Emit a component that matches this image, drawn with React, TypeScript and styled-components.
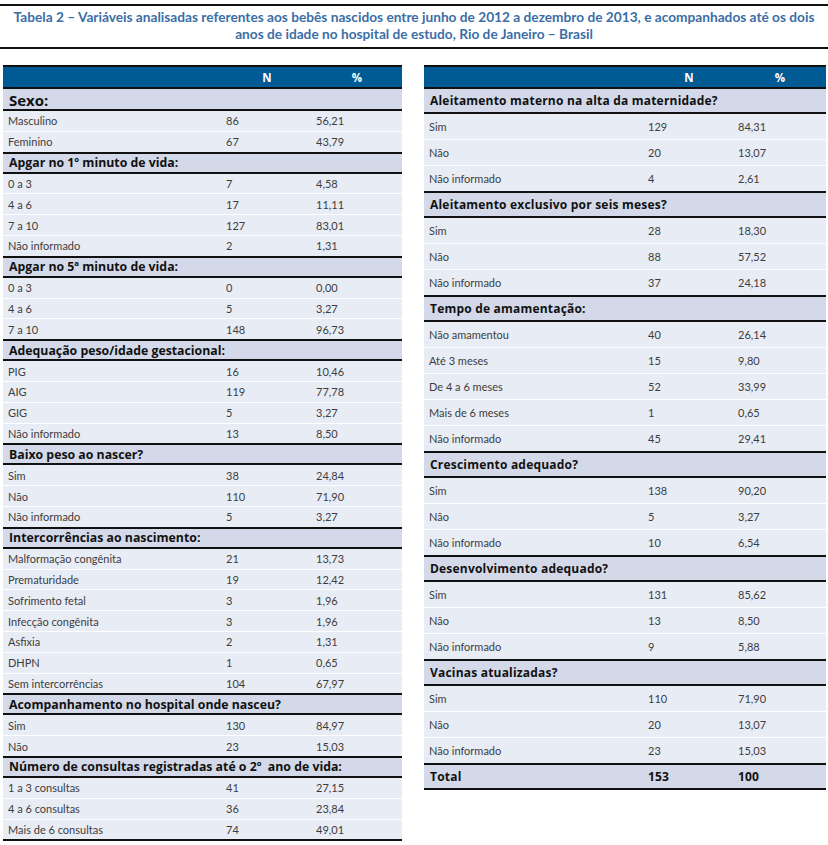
import React from "react";
import styled, { createGlobalStyle } from "styled-components";

const GlobalStyle = createGlobalStyle`
  html, body { margin: 0; padding: 0; background: #ffffff; }
  body { font-family: Lato, "Open Sans", "Liberation Sans", sans-serif; color: #2b2b2b; }
  * { box-sizing: border-box; }
`;

type Group = { title: string; big?: boolean; rows: [string, string, string][] };

const leftGroups: Group[] = [
  { title: "Sexo:", big: true, rows: [["Masculino", "86", "56,21"], ["Feminino", "67", "43,79"]] },
  {
    title: "Apgar no 1º minuto de vida:",
    rows: [["0 a 3", "7", "4,58"], ["4 a 6", "17", "11,11"], ["7 a 10", "127", "83,01"], ["Não informado", "2", "1,31"]],
  },
  { title: "Apgar no 5ª minuto de vida:", rows: [["0 a 3", "0", "0,00"], ["4 a 6", "5", "3,27"], ["7 a 10", "148", "96,73"]] },
  {
    title: "Adequação peso/idade gestacional:",
    rows: [["PIG", "16", "10,46"], ["AIG", "119", "77,78"], ["GIG", "5", "3,27"], ["Não informado", "13", "8,50"]],
  },
  { title: "Baixo peso ao nascer?", rows: [["Sim", "38", "24,84"], ["Não", "110", "71,90"], ["Não informado", "5", "3,27"]] },
  {
    title: "Intercorrências ao nascimento:",
    rows: [
      ["Malformação congênita", "21", "13,73"],
      ["Prematuridade", "19", "12,42"],
      ["Sofrimento fetal", "3", "1,96"],
      ["Infecção congênita", "3", "1,96"],
      ["Asfixia", "2", "1,31"],
      ["DHPN", "1", "0,65"],
      ["Sem intercorrências", "104", "67,97"],
    ],
  },
  { title: "Acompanhamento no hospital onde nasceu?", rows: [["Sim", "130", "84,97"], ["Não", "23", "15,03"]] },
  {
    title: "Número de consultas registradas até o 2º\u00a0 ano de vida:",
    rows: [["1 a 3 consultas", "41", "27,15"], ["4 a 6 consultas", "36", "23,84"], ["Mais de 6 consultas", "74", "49,01"]],
  },
];

const rightGroups: Group[] = [
  {
    title: "Aleitamento materno na alta da maternidade?",
    rows: [["Sim", "129", "84,31"], ["Não", "20", "13,07"], ["Não informado", "4", "2,61"]],
  },
  {
    title: "Aleitamento exclusivo por seis meses?",
    rows: [["Sim", "28", "18,30"], ["Não", "88", "57,52"], ["Não informado", "37", "24,18"]],
  },
  {
    title: "Tempo de amamentação:",
    rows: [
      ["Não amamentou", "40", "26,14"],
      ["Até 3 meses", "15", "9,80"],
      ["De 4 a 6 meses", "52", "33,99"],
      ["Mais de 6 meses", "1", "0,65"],
      ["Não informado", "45", "29,41"],
    ],
  },
  { title: "Crescimento adequado?", rows: [["Sim", "138", "90,20"], ["Não", "5", "3,27"], ["Não informado", "10", "6,54"]] },
  { title: "Desenvolvimento adequado?", rows: [["Sim", "131", "85,62"], ["Não", "13", "8,50"], ["Não informado", "9", "5,88"]] },
  { title: "Vacinas atualizadas?", rows: [["Sim", "110", "71,90"], ["Não", "20", "13,07"], ["Não informado", "23", "15,03"]] },
];

const Page = styled.div`
  width: 828px;
  padding-top: 4px;
`;

const Rule = styled.div`
  height: 2px;
  background: #111;
`;

const Title = styled.div`
  padding: 2px 0 5px;
  text-align: center;
  color: #3b6ea6;
  font-family: Lato, "Liberation Sans", sans-serif;
  font-weight: 700;
  font-size: 13.7px;
  line-height: 17px;
`;

const TitleLine = styled.div`
  white-space: nowrap;
`;

const Columns = styled.div`
  display: flex;
  align-items: flex-start;
  gap: 22px;
  padding: 16px 0 0 3px;
`;

type Size = "compact" | "roomy";

const Table = styled.div<{ $width: number; $cols: string; $last: "data" | "section" }>`
  width: ${(p) => p.$width}px;
  --cols: ${(p) => p.$cols};
  border-top: 2px solid #111;
  border-bottom: ${(p) => (p.$last === "data" ? "2px solid #111" : "none")};
`;

const Header = styled.div`
  display: grid;
  grid-template-columns: var(--cols);
  height: 20px;
  align-items: center;
  background: #005a93;
  color: #ffffff;
  font-family: "Open Sans", Lato, sans-serif;
  font-weight: 700;
  font-size: 11.5px;
`;

const HeadCell = styled.div`
  text-align: center;
`;

const Section = styled.div<{ $size: Size; $big?: boolean }>`
  display: grid;
  grid-template-columns: var(--cols);
  align-items: center;
  height: ${(p) => (p.$big ? 24 : p.$size === "compact" ? 22 : 27)}px;
  background: #d3d9e8;
  border-top: 2px solid #111;
  border-bottom: 2px solid #111;
  color: #111;
  font-family: "Open Sans", Lato, sans-serif;
  font-weight: 700;
  font-size: ${(p) => (p.$big ? 15 : p.$size === "compact" ? 12.3 : 12)}px;
  letter-spacing: ${(p) => (p.$size === "compact" ? "0px" : "0.2px")};
  padding-top: ${(p) => (p.$big ? 1 : 0)}px;
  & + & {
    border-top: none;
  }
`;

const SectionTitle = styled.div`
  padding-left: 6px;
  white-space: nowrap;
  grid-column: 1 / -1;
`;

const TotalCell = styled.div<{ $first?: boolean }>`
  padding-left: ${(p) => (p.$first ? 6 : 4)}px;
`;

const DataRow = styled.div<{ $size: Size }>`
  display: grid;
  grid-template-columns: var(--cols);
  align-items: center;
  height: ${(p) => (p.$size === "compact" ? 19.8 : 25)}px;
  background: #e8ecf5;
  color: #3d3d3d;
  font-family: Lato, "Liberation Sans", sans-serif;
  font-size: 11px;
  & + & {
    margin-top: 1px;
  }
`;

const Cell = styled.div<{ $first?: boolean }>`
  padding-left: ${(p) => (p.$first ? 5 : 4)}px;
  white-space: nowrap;
`;

const DataTable: React.FC<{
  groups: Group[];
  width: number;
  cols: string;
  size: Size;
  total?: [string, string, string];
}> = ({ groups, width, cols, size, total }) => (
  <Table $width={width} $cols={cols} $last={total ? "section" : "data"}>
    <Header>
      <div />
      <HeadCell>N</HeadCell>
      <HeadCell>%</HeadCell>
    </Header>
    {groups.map((g) => (
      <React.Fragment key={g.title}>
        <Section $size={size} $big={g.big}>
          <SectionTitle>{g.title}</SectionTitle>
        </Section>
        {g.rows.map((r) => (
          <DataRow key={r[0]} $size={size}>
            <Cell $first>{r[0]}</Cell>
            <Cell>{r[1]}</Cell>
            <Cell>{r[2]}</Cell>
          </DataRow>
        ))}
      </React.Fragment>
    ))}
    {total && (
      <Section $size={size}>
        <TotalCell $first>{total[0]}</TotalCell>
        <TotalCell>{total[1]}</TotalCell>
        <TotalCell>{total[2]}</TotalCell>
      </Section>
    )}
  </Table>
);

export default function App() {
  return (
    <Page>
      <GlobalStyle />
      <Rule />
      <Title>
        <TitleLine>
          Tabela 2 – Variáveis analisadas referentes aos bebês nascidos entre junho de 2012 a dezembro de 2013, e acompanhados até os dois
        </TitleLine>
        <TitleLine>anos de idade no hospital de estudo, Rio de Janeiro – Brasil</TitleLine>
      </Title>
      <Rule />
      <Columns>
        <DataTable groups={leftGroups} width={399} cols="219px 90px 90px" size="compact" />
        <DataTable
          groups={rightGroups}
          width={402}
          cols="220px 90px 92px"
          size="roomy"
          total={["Total", "153", "100"]}
        />
      </Columns>
    </Page>
  );
}
